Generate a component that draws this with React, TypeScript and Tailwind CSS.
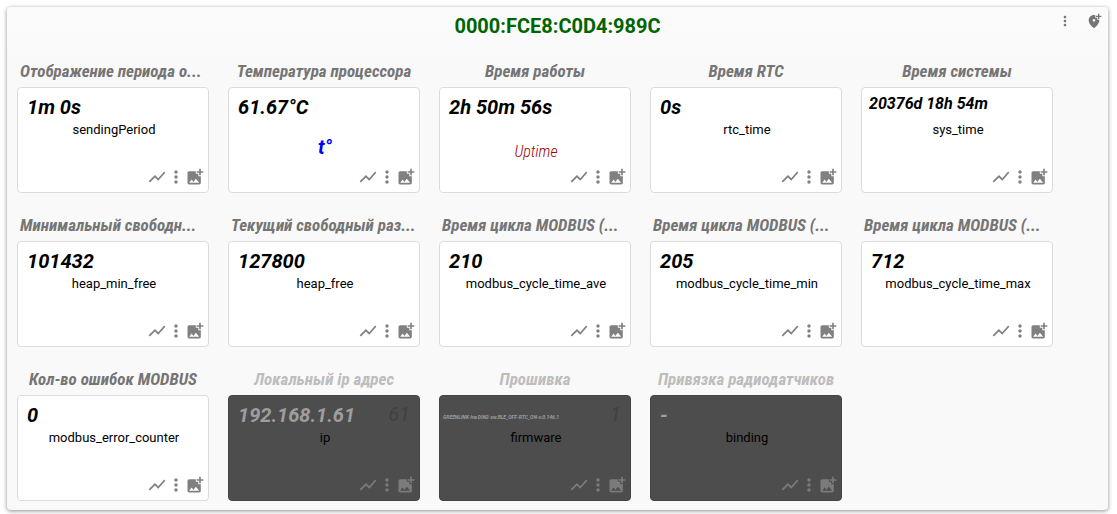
import React from 'react';
import clsx from 'clsx';
import { MdAddLocationAlt, MdAddPhotoAlternate, MdMoreVert, MdShowChart } from 'react-icons/md';

type Sensor = {
    title: string;
    value: string;
    name: string;
    size?: 'small' | 'tiny';
    label?: 'temperature' | 'uptime';
    disabled?: boolean;
    badge?: string;
};

const sensors: Sensor[] = [
    { title: 'Отображение периода о...', value: '1m 0s', name: 'sendingPeriod' },
    { title: 'Температура процессора', value: '61.67°C', name: 't°', label: 'temperature' },
    { title: 'Время работы', value: '2h 50m 56s', name: 'Uptime', label: 'uptime' },
    { title: 'Время RTC', value: '0s', name: 'rtc_time' },
    { title: 'Время системы', value: '20376d 18h 54m', name: 'sys_time', size: 'small' },
    { title: 'Минимальный свободн...', value: '101432', name: 'heap_min_free' },
    { title: 'Текущий свободный раз...', value: '127800', name: 'heap_free' },
    { title: 'Время цикла MODBUS (...', value: '210', name: 'modbus_cycle_time_ave' },
    { title: 'Время цикла MODBUS (...', value: '205', name: 'modbus_cycle_time_min' },
    { title: 'Время цикла MODBUS (...', value: '712', name: 'modbus_cycle_time_max' },
    { title: 'Кол-во ошибок MODBUS', value: '0', name: 'modbus_error_counter' },
    { title: 'Локальный ip адрес', value: '192.168.1.61', name: 'ip', disabled: true, badge: '61' },
    { title: 'Прошивка', value: 'GREENLINK-hw.DIN2-sw.BLE_OFF-RTC_ON-v.0.146.1', name: 'firmware', size: 'tiny', disabled: true, badge: '1' },
    { title: 'Привязка радиодатчиков', value: '-', name: 'binding', disabled: true },
];

function SensorCard({ sensor }: { sensor: Sensor }) {
    const { title, value, name, size, label, disabled, badge } = sensor;

    return (
        <section>
            <h2
                className={clsx(
                    "h-5 mb-1.5 px-[3px] whitespace-nowrap font-['Liberation_Sans_Narrow','Roboto_Condensed',sans-serif] text-[17px] leading-5 font-bold italic",
                    // shortened titles fill the line from the left
                    title.endsWith('...') ? 'text-left' : 'text-center',
                    disabled ? 'text-[#bdbdbd]' : 'text-[#757575]'
                )}
            >
                {title}
            </h2>
            <div
                className={clsx(
                    'relative flex flex-col h-[106px] rounded border pt-2 pb-[5px]',
                    disabled ? 'bg-[#4d4d4d] border-[#444]' : 'bg-white border-[#dcdcdc]'
                )}
            >
                <p
                    className={clsx(
                        'h-[22px] font-bold italic whitespace-nowrap',
                        !size && 'pl-[9px] text-xl leading-[22px]',
                        size === 'small' && 'pl-[7px] text-base leading-4',
                        size === 'tiny' && 'pl-[3px] pt-2 text-[5px] leading-[10px]',
                        disabled ? 'text-[#9e9e9e]' : 'text-black'
                    )}
                >
                    {value}
                </p>
                {badge && (
                    <span className="absolute top-[7px] right-[9px] text-xl leading-[22px] italic text-[#404040]">{badge}</span>
                )}
                <p
                    className={clsx(
                        'pl-0.5 text-center',
                        !label && 'text-[13px] leading-6 text-black',
                        label === 'temperature' && 'mt-[17px] text-xl leading-6 font-bold italic text-[#0000ff]',
                        label === 'uptime' && "mt-6 font-['Roboto_Condensed',Roboto,sans-serif] text-base leading-5 font-light italic text-[#a00000]"
                    )}
                >
                    {name}
                </p>
                <div className={clsx('mt-auto flex justify-end pr-1', disabled ? 'text-[#7b7b7b]' : 'text-[#808080]')}>
                    <button className="flex w-[19px] justify-center" aria-label="Chart">
                        <MdShowChart className="size-5 shrink-0" />
                    </button>
                    <button className="flex w-[19px] justify-center" aria-label="Menu">
                        <MdMoreVert className="size-5 shrink-0" />
                    </button>
                    <button className="flex w-[19px] justify-center" aria-label="Add image">
                        <MdAddPhotoAlternate className="size-5 shrink-0" />
                    </button>
                </div>
            </div>
        </section>
    );
}

export default function App() {
    return (
        <div className="pt-[7px] pl-[7px] pr-[9px] pb-1 bg-white font-[Roboto,sans-serif]">
            <main className="rounded bg-[#f9f9f9] pb-[9px] shadow-[0_1px_4px_rgba(0,0,0,0.45)]">
                {/* Device header */}
                <header className="grid grid-cols-[1fr_auto_1fr] items-start h-[54px] rounded-t pt-2 bg-linear-to-b from-[#fbfbfb] to-[#f9f9f9]">
                    <h1 className="col-start-2 text-xl leading-[22px] font-bold text-[#006400]">0000:FCE8:C0D4:989C</h1>
                    <div className="flex justify-end gap-[13px] pr-1.5 -mt-0.5 text-[#757575]">
                        <button aria-label="Device menu">
                            <MdMoreVert className="size-4" />
                        </button>
                        <button aria-label="Add location">
                            <MdAddLocationAlt className="size-4" />
                        </button>
                    </div>
                </header>

                {/* Sensors */}
                <div className="grid grid-cols-[repeat(auto-fill,192px)] gap-x-[19px] gap-y-[22px] px-2.5">
                    {sensors.map(sensor => (
                        <SensorCard key={sensor.name} sensor={sensor} />
                    ))}
                </div>
            </main>
        </div>
    );
}
